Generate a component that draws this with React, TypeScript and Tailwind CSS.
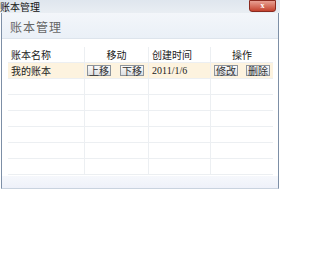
import React from "react";

const rows = [
  { name: "我的账本", date: "2011/1/6" },
  null,
  null,
  null,
  null,
  null,
  null,
];

function SmallButton({ label }: { label: string }) {
  return (
    <span className="inline-flex h-[11px] w-[24px] items-center justify-center border border-[#8d949c] bg-gradient-to-b from-[#fbfbfb] to-[#dcdfe3] text-[10px] leading-none text-[#333]">
      {label}
    </span>
  );
}

export default function App() {
  return (
    <div
      className="h-[270px] w-[280px] overflow-hidden bg-white text-[#222]"
      style={{ fontFamily: '"Liberation Serif", "Noto Sans CJK SC", serif' }}
    >
      {/* title bar */}
      <div className="flex h-[13px] items-start justify-between bg-gradient-to-b from-[#dfe6ee] to-[#e9eef3] pr-[4px]">
        <span className="pt-[1px] text-[10px] leading-[12px] text-[#111]" style={{ fontFamily: '"Noto Sans CJK SC", sans-serif' }}>
          账本管理
        </span>
        <span className="flex h-[12px] w-[27px] items-center justify-center rounded-b-[3px] border border-[#8a2a1f] bg-gradient-to-b from-[#e8a093] to-[#c3402c] text-[8px] font-bold leading-none text-white">
          x
        </span>
      </div>

      {/* dialog panel */}
      <div className="mx-[1px] flex h-[176px] flex-col border-x border-b border-x-[#7d8fa6] border-b-[#c9d3df] bg-[#eef2f9]">
        <div className="flex h-[27px] items-center border-b border-[#dde4ec] bg-gradient-to-b from-[#f3f6fa] to-[#eaf0f7] px-[8px] pt-[3px]">
          <span className="text-[12px] leading-none tracking-[1px] text-[#666]" style={{ fontFamily: '"Noto Sans CJK SC", sans-serif' }}>
            账本管理
          </span>
        </div>
        <div className="flex-1 bg-white pt-[8px] pl-[6px] pr-[5px]">
          <div className="grid grid-cols-[76px_64px_62px_1fr] text-[10px]" style={{ fontFamily: '"Noto Sans CJK SC", sans-serif' }}>
            <div className="flex h-[16px] items-center border-b border-[#eceff2] pl-[3px]">账本名称</div>
            <div className="flex h-[16px] items-center justify-center border-b border-l border-[#eceff2]">移动</div>
            <div className="flex h-[16px] items-center border-b border-l border-[#eceff2] pl-[3px]">创建时间</div>
            <div className="flex h-[16px] items-center justify-center border-b border-l border-[#eceff2]">操作</div>
            {rows.map((r, i) =>
              r ? (
                <React.Fragment key={i}>
                  <div className="flex h-[16px] items-center border-b border-[#eceff2] bg-[#fdf3df] pl-[3px]">{r.name}</div>
                  <div className="flex h-[16px] items-center gap-[9px] border-b border-l border-[#eceff2] bg-[#fdf3df] pl-[2px]">
                    <SmallButton label="上移" />
                    <SmallButton label="下移" />
                  </div>
                  <div className="flex h-[16px] items-center border-b border-l border-[#eceff2] bg-[#fdf3df] pl-[3px]" style={{ fontFamily: '"Liberation Serif", serif' }}>
                    {r.date}
                  </div>
                  <div className="flex h-[16px] items-center gap-[8px] border-b border-l border-[#eceff2] bg-[#fdf3df] pl-[3px]">
                    <SmallButton label="修改" />
                    <SmallButton label="删除" />
                  </div>
                </React.Fragment>
              ) : (
                <React.Fragment key={i}>
                  <div className="h-[16px] border-b border-[#eceff2]" />
                  <div className="h-[16px] border-b border-l border-[#eceff2]" />
                  <div className="h-[16px] border-b border-l border-[#eceff2]" />
                  <div className="h-[16px] border-b border-l border-[#eceff2]" />
                </React.Fragment>
              )
            )}
          </div>
          <div className="mt-[1px] h-[12px] -ml-[6px] -mr-[5px] bg-gradient-to-b from-[#f6f8fc] to-[#eef1f9]" />
        </div>
      </div>
    </div>
  );
}
